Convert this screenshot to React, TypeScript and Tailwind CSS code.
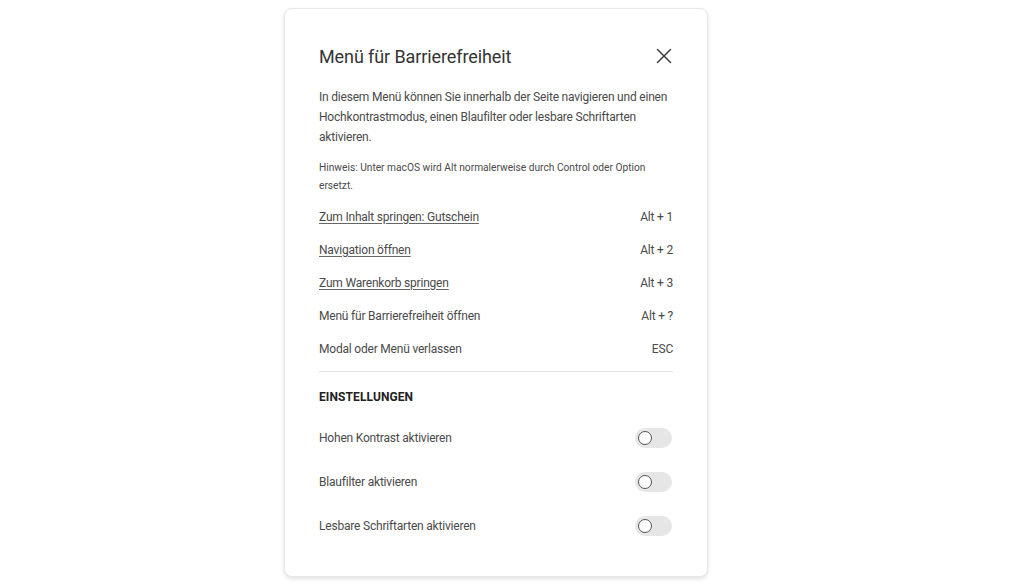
import { X } from "lucide-react"

const shortcuts = [
  { label: "Zum Inhalt springen: Gutschein", keys: "Alt + 1", link: true },
  { label: "Navigation öffnen", keys: "Alt + 2", link: true },
  { label: "Zum Warenkorb springen", keys: "Alt + 3", link: true },
  { label: "Menü für Barrierefreiheit öffnen", keys: "Alt + ?", link: false },
  { label: "Modal oder Menü verlassen", keys: "ESC", link: false },
]

const settings = ["Hohen Kontrast aktivieren", "Blaufilter aktivieren", "Lesbare Schriftarten aktivieren"]

function Toggle() {
  return (
    <div className="w-[37px] h-[20px] rounded-full bg-[#e6e6e6] flex items-center pl-[3px]">
      <div className="w-[14px] h-[14px] rounded-full border border-[#555] bg-white" />
    </div>
  )
}

export default function App() {
  return (
    <main
      className="w-full h-[584px] bg-white flex justify-center pt-[8px] pr-[32px] text-[#4a4a4a]"
      style={{ fontFamily: "Roboto, 'Noto Sans', sans-serif" }}
    >
      <div className="w-[424px] h-[569px] rounded-lg bg-white border border-[#e8e8e8] shadow-[0_2px_4px_rgba(0,0,0,0.12)] px-[34px] pt-[35px]">
        {/* Header */}
        <div className="flex items-center justify-between h-[24px]">
          <h2 className="text-[18px] text-[#333] font-normal tracking-[-0.1px]">Menü für Barrierefreiheit</h2>
          <X className="w-[26px] h-[26px] text-[#444] -mr-[4px] -mt-[1px]" strokeWidth={1.4} />
        </div>

        <p className="mt-[19px] text-[12px] leading-[20px] tracking-[-0.2px]">
          In diesem Menü können Sie innerhalb der Seite navigieren und einen Hochkontrastmodus, einen Blaufilter oder
          lesbare Schriftarten aktivieren.
        </p>
        <p className="mt-[12px] text-[10.2px] leading-[18px]">
          Hinweis: Unter macOS wird Alt normalerweise durch Control oder Option ersetzt.
        </p>

        {/* Shortcuts */}
        <ul className="mt-[5px]">
          {shortcuts.map((s) => (
            <li key={s.keys} className="flex items-center justify-between h-[33px] text-[12px] tracking-[-0.2px]">
              <span className={s.link ? "underline underline-offset-2 decoration-[#666]" : ""}>{s.label}</span>
              <span>{s.keys}</span>
            </li>
          ))}
        </ul>

        <div className="mt-[6px] border-t border-[#e2e2e2]" />

        <h3 className="mt-[16px] text-[12px] font-bold text-[#222] tracking-[0.1px]">EINSTELLUNGEN</h3>

        <ul className="mt-[10px]">
          {settings.map((s) => (
            <li key={s} className="flex items-center justify-between h-[44px] text-[12px] tracking-[-0.2px]">
              <span>{s}</span>
              <div className="mr-[1px]">
                <Toggle />
              </div>
            </li>
          ))}
        </ul>
      </div>
    </main>
  )
}
